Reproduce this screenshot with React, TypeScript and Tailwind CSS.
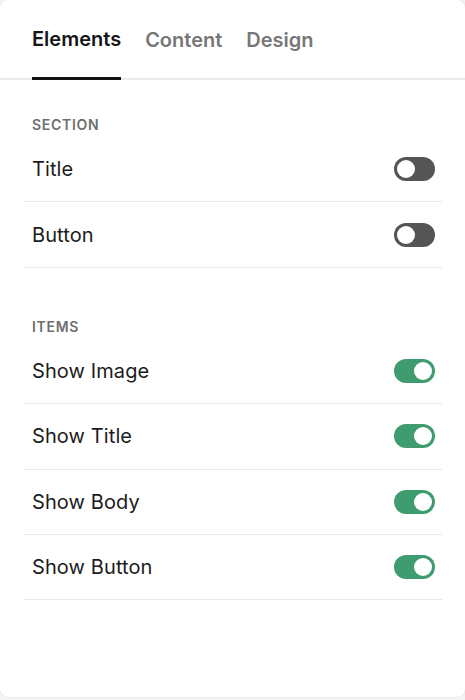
import { useState } from 'react';

type Item = { label: string; on: boolean };

function Toggle({ on, onClick }: { on: boolean; onClick: () => void }) {
  return (
    <button
      onClick={onClick}
      className={`flex h-6 w-[41px] items-center rounded-full px-[3px] ${on ? 'justify-end bg-[#3f9c6f]' : 'justify-start bg-[#555555]'}`}
    >
      <span className="block h-[18px] w-[18px] rounded-full bg-white" />
    </button>
  );
}

function Group({ title, items, onToggle }: { title: string; items: Item[]; onToggle: (i: number) => void }) {
  return (
    <div>
      <div className="px-2 text-[14px] font-semibold uppercase leading-4 tracking-wider text-[#6e6e6e]">{title}</div>
      <div className="mt-1">
        {items.map((item, i) => (
          <div key={item.label} className="flex h-[65.4px] items-center justify-between border-b border-[#e8e8e8] pl-2 pr-[7px]">
            <span className="text-[20px] tracking-[0.1px] text-[#1c1c1c]">{item.label}</span>
            <Toggle on={item.on} onClick={() => onToggle(i)} />
          </div>
        ))}
      </div>
    </div>
  );
}

export default function App() {
  const [tab, setTab] = useState('Elements');
  const [section, setSection] = useState<Item[]>([
    { label: 'Title', on: false },
    { label: 'Button', on: false },
  ]);
  const [items, setItems] = useState<Item[]>([
    { label: 'Show Image', on: true },
    { label: 'Show Title', on: true },
    { label: 'Show Body', on: true },
    { label: 'Show Button', on: true },
  ]);

  const flip = (list: Item[], i: number) => list.map((x, j) => (j === i ? { ...x, on: !x.on } : x));

  return (
    <div className="h-[700px] w-[465px] bg-[#f4f4f4] font-['Inter',sans-serif]">
      <div className="h-[697px] w-full rounded-lg bg-white shadow-[0_0_2px_rgba(0,0,0,0.12)]">
        <nav className="flex h-20 gap-6 border-b-2 border-[#ebebeb] px-8">
          {['Elements', 'Content', 'Design'].map((t) => (
            <button
              key={t}
              onClick={() => setTab(t)}
              className={`-mb-0.5 flex items-center text-[20px] font-semibold ${t === tab ? 'border-b-[3px] border-[#111111] text-[#161616]' : 'text-[#777777]'}`}
            >
              {t}
            </button>
          ))}
        </nav>
        <div className="pl-6 pr-[23px] pt-[37px]">
          <Group title="Section" items={section} onToggle={(i) => setSection(flip(section, i))} />
          <div className="mt-[51px]">
            <Group title="Items" items={items} onToggle={(i) => setItems(flip(items, i))} />
          </div>
        </div>
      </div>
    </div>
  );
}
